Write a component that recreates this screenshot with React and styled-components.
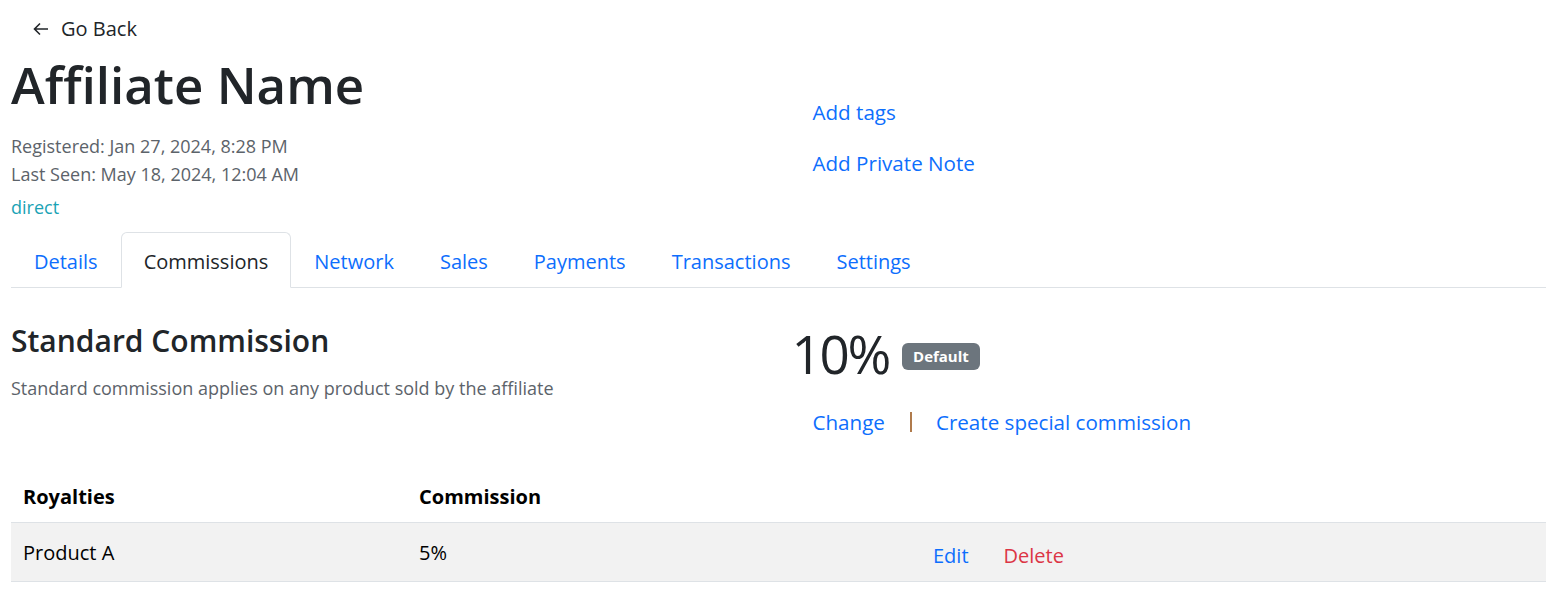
import React from "react";
import styled, { createGlobalStyle } from "styled-components";

const Global = createGlobalStyle`
  html, body { margin: 0; padding: 0; background: #fff; }
  body {
    font-family: "Open Sans", "Noto Sans", sans-serif;
    color: #212529;
    -webkit-font-smoothing: antialiased;
  }
  * { box-sizing: border-box; }
`;

const Page = styled.div`
  padding: 0 11px;
  width: 1557px;
`;

const BackLink = styled.a`
  display: inline-flex;
  align-items: center;
  gap: 12px;
  margin: 15px 0 0 22px;
  font-size: 20px;
  line-height: 28px;
  color: #212529;
  text-decoration: none;
`;

const HeaderGrid = styled.div`
  display: grid;
  grid-template-columns: 1fr 1fr;
  column-gap: 24px;
`;

const Title = styled.h1`
  margin: 11px 0 0;
  font-size: 51px;
  font-weight: 600;
  line-height: 1.2;
`;

const Meta = styled.div`
  margin-top: 17px;
  font-size: 18px;
  line-height: 28px;
  color: #5c636a;
`;

const Source = styled.div`
  margin-top: 5px;
  font-size: 18px;
  line-height: 28px;
  color: #1aa3b5;
`;

const RightStack = styled.div`
  display: flex;
  flex-direction: column;
  align-items: flex-start;
  gap: 21px;
  padding-top: 54px;
`;

const LinkButton = styled.a`
  display: inline-block;
  padding: 0 ${(p) => (p.$tight ? "24px" : "22px")};
  font-size: 20.6px;
  line-height: 30px;
  color: #0d6efd;
  text-decoration: none;
  cursor: pointer;
`;

const Divider = styled.span`
  display: inline-block;
  width: 2px;
  height: 20px;
  margin: 0 0 0 3px;
  background: #b07b4c;
`;

const Tabs = styled.nav`
  display: flex;
  margin-top: 11px;
  border-bottom: 1px solid #dee2e6;
`;

const Tab = styled.a`
  display: block;
  padding: 14px 22px 10px;
  margin-bottom: -1px;
  font-size: 20px;
  line-height: 30px;
  color: ${(p) => (p.$active ? "#212529" : "#0d6efd")};
  background: ${(p) => (p.$active ? "#fff" : "transparent")};
  text-decoration: none;
  border: 1px solid ${(p) => (p.$active ? "#dee2e6" : "transparent")};
  border-bottom-color: ${(p) => (p.$active ? "#fff" : "transparent")};
  border-radius: 6px 6px 0 0;
`;

const Section = styled.div`
  display: grid;
  grid-template-columns: 1fr 1fr;
  column-gap: 24px;
  padding-top: 33px;
`;

const SectionTitle = styled.h2`
  margin: 0;
  font-size: 30px;
  font-weight: 600;
  line-height: 40px;
`;

const SectionText = styled.p`
  margin: 14px 0 0;
  font-size: 18px;
  line-height: 26px;
  color: #5c636a;
`;

const RateRow = styled.div`
  display: flex;
  align-items: center;
  gap: 13px;
  margin-top: -2px;
  padding-left: 1px;
`;

const Rate = styled.span`
  font-size: 53px;
  line-height: 70px;
  font-weight: 400;
  letter-spacing: -2.3px;
`;

const Badge = styled.span`
  display: inline-block;
  padding: 0 11px;
  height: 27px;
  line-height: 27px;
  border-radius: 6px;
  background: #6c757d;
  color: #fff;
  font-size: 15px;
  font-weight: 700;
  margin-top: 5px;
`;

const Actions = styled.div`
  display: flex;
  align-items: center;
  margin-top: 18px;
`;

const Table = styled.div`
  margin-top: 33px;
`;

const Row = styled.div`
  display: grid;
  grid-template-columns: 396px 514px 1fr;
  align-items: center;
  height: ${(p) => (p.$head ? "53px" : "59px")};
  background: ${(p) => (p.$head ? "#fff" : "#f2f2f2")};
  border-bottom: 1px solid #dee2e6;
  font-size: 20px;
  font-weight: ${(p) => (p.$head ? 700 : 400)};
  color: #000;
`;

const Cell = styled.div`
  padding: 0 12px;
`;

const RowActions = styled.div`
  display: flex;
  gap: 35px;
  padding: 7px 12px 0;
`;

const PlainLink = styled.a`
  font-size: 20px;
  color: ${(p) => (p.$danger ? "#dc3545" : "#0d6efd")};
  text-decoration: none;
`;

const Arrow = () => (
  <svg width="16" height="14" viewBox="0 0 16 14" fill="none">
    <path d="M15 7H1.5M7 1.5L1.5 7L7 12.5" stroke="#212529" strokeWidth="1.6" />
  </svg>
);

export default function App() {
  const tabs = ["Details", "Commissions", "Network", "Sales", "Payments", "Transactions", "Settings"];
  return (
    <Page>
      <Global />
      <BackLink href="#">
        <Arrow />
        Go Back
      </BackLink>
      <HeaderGrid>
        <div>
          <Title>Affiliate Name</Title>
          <Meta>
            Registered: Jan 27, 2024, 8:28 PM
            <br />
            Last Seen: May 18, 2024, 12:04 AM
          </Meta>
          <Source>direct</Source>
        </div>
        <RightStack>
          <LinkButton>Add tags</LinkButton>
          <LinkButton>Add Private Note</LinkButton>
        </RightStack>
      </HeaderGrid>
      <Tabs>
        {tabs.map((t) => (
          <Tab key={t} $active={t === "Commissions"}>
            {t}
          </Tab>
        ))}
      </Tabs>
      <Section>
        <div>
          <SectionTitle>Standard Commission</SectionTitle>
          <SectionText>Standard commission applies on any product sold by the affiliate</SectionText>
        </div>
        <div>
          <RateRow>
            <Rate>10%</Rate>
            <Badge>Default</Badge>
          </RateRow>
          <Actions>
            <LinkButton>Change</LinkButton>
            <Divider />
            <LinkButton $tight>Create special commission</LinkButton>
          </Actions>
        </div>
      </Section>
      <Table>
        <Row $head>
          <Cell>Royalties</Cell>
          <Cell>Commission</Cell>
          <Cell />
        </Row>
        <Row>
          <Cell>Product A</Cell>
          <Cell>5%</Cell>
          <RowActions>
            <PlainLink>Edit</PlainLink>
            <PlainLink $danger>Delete</PlainLink>
          </RowActions>
        </Row>
      </Table>
    </Page>
  );
}
